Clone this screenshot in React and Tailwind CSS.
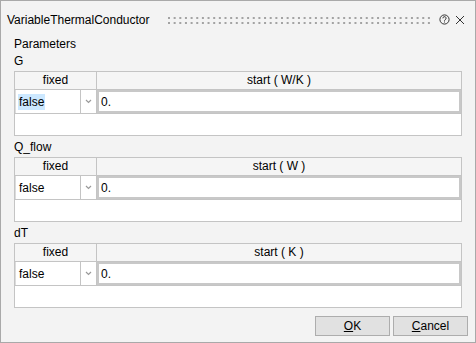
import React from "react";

const TABLES = [
  { name: "G", unit: "W/K", selected: true },
  { name: "Q_flow", unit: "W", selected: false },
  { name: "dT", unit: "K", selected: false },
];

function Grip() {
  const dots = [];
  for (let i = 0; i < 47; i++) {
    const x = i * 5.65;
    dots.push(<rect key={"a" + i} x={x} y="0" width="2" height="2" fill="#a3a3a3" />);
    dots.push(<rect key={"b" + i} x={x} y="5" width="2" height="2" fill="#a3a3a3" />);
  }
  return (
    <svg width="263" height="7" viewBox="0 0 263 7" className="mt-[5px] shrink-0">
      {dots}
    </svg>
  );
}

function HelpIcon() {
  return (
    <svg width="11" height="11" viewBox="0 0 11 11" className="mt-[2px] shrink-0">
      <circle cx="5.5" cy="5.5" r="4.6" fill="none" stroke="#333" strokeWidth="1" />
      <path
        d="M3.9 4.3a1.6 1.6 0 1 1 2.3 1.4c-.5.3-.7.6-.7 1.1"
        fill="none"
        stroke="#333"
        strokeWidth="1"
      />
      <rect x="5" y="7.5" width="1" height="1" fill="#333" />
    </svg>
  );
}

function CloseIcon() {
  return (
    <svg width="10" height="10" viewBox="0 0 10 10" className="mt-[3px] shrink-0">
      <path d="M1 1L9 9M9 1L1 9" stroke="#333" strokeWidth="1" fill="none" />
    </svg>
  );
}

function Chevron() {
  return (
    <svg width="7" height="5" viewBox="0 0 7 5">
      <path d="M1 1L3.5 3.5L6 1" stroke="#9a9a9a" strokeWidth="1.2" fill="none" />
    </svg>
  );
}

function ParamTable({ name, unit, selected, first }) {
  return (
    <div className={first ? "mt-px" : "mt-[3px]"}>
      <div className="h-4 leading-4">{name}</div>
      <div className="mt-[2px] flex h-[65px] flex-col border border-[#c4c4c4] bg-white">
        <div className="flex h-[18px] shrink-0 border-b border-[#c4c4c4] bg-[#f5f5f5] leading-[17px]">
          <div className="w-[82px] border-r border-[#c4c4c4] text-center">fixed</div>
          <div className="flex-1 text-center">start ( {unit} )</div>
        </div>
        <div className="flex h-[24px] shrink-0 border-b border-[#c4c4c4]">
          <div className="flex w-[66px] items-center border-l border-[#dcdcdc] border-r border-r-[#c4c4c4] pl-[2px]">
            <span className={selected ? "bg-[#cce8ff] px-px leading-[16px]" : "px-px leading-[16px]"}>
              false
            </span>
          </div>
          <div className="flex w-[16px] items-center justify-center border-r border-[#c4c4c4]">
            <Chevron />
          </div>
          <div className="flex flex-1 items-center border-2 border-[#c8c8c8] pl-[2px]">0.</div>
        </div>
        <div className="flex-1" />
      </div>
    </div>
  );
}

export default function App() {
  return (
    <div className="flex h-[343px] w-[476px] flex-col border border-[#a9a9a9] bg-[#f3f3f3] font-['Liberation_Sans',Arial,sans-serif] text-[12px] text-black">
      <div className="flex h-[35px] shrink-0 items-start pl-[6px] pr-[10px] pt-[11px]">
        <div className="leading-4">VariableThermalConductor</div>
        <div className="ml-auto flex items-start">
          <Grip />
          <div className="ml-[8px]">
            <HelpIcon />
          </div>
          <div className="ml-[5px]">
            <CloseIcon />
          </div>
        </div>
      </div>
      <div className="px-[13px]">
        <div className="h-4 leading-4">Parameters</div>
        {TABLES.map((t, i) => (
          <ParamTable key={t.name} {...t} first={i === 0} />
        ))}
      </div>
      <div className="mt-[8px] flex justify-end gap-[3px] pr-[7px]">
        <button
          type="button"
          className="h-[20px] w-[75px] border border-[#adadad] bg-[#e1e1e1] leading-[18px]"
        >
          <span className="underline underline-offset-1">O</span>K
        </button>
        <button
          type="button"
          className="h-[20px] w-[75px] border border-[#adadad] bg-[#e1e1e1] leading-[18px]"
        >
          <span className="underline underline-offset-1">C</span>ancel
        </button>
      </div>
    </div>
  );
}
